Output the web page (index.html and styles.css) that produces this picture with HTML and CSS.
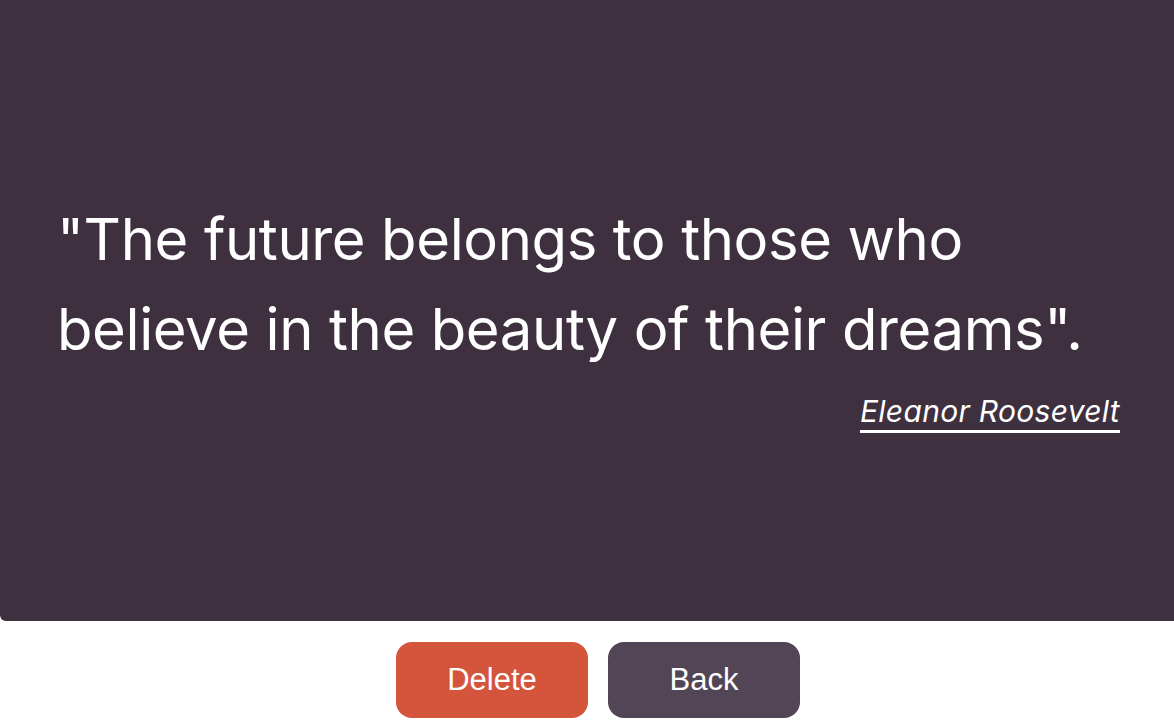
FILE: index.html
```html
<!DOCTYPE html>
<html>
<head>
<meta charset="utf-8">
<link rel="stylesheet" href="styles.css">
</head>
<body>
<div class="card">
  <div class="content">
    <p class="quote">"The future belongs to those who believe in the beauty of their dreams".</p>
    <p class="author"><a href="#">Eleanor Roosevelt</a></p>
  </div>
</div>
<div class="actions">
  <button class="btn btn-delete">Delete</button>
  <button class="btn btn-back">Back</button>
</div>
</body>
</html>
```
FILE: styles.css
```css
html, body {
  margin: 0;
  padding: 0;
  background: #ffffff;
}
body {
  font-family: Inter, "Noto Sans", sans-serif;
  overflow: hidden;
}
.card {
  background: #3f3040;
  height: 621px;
  border-radius: 0 0 0 6px;
  display: flex;
  flex-direction: column;
  justify-content: center;
  padding: 0 54px 0 57px;
  box-sizing: border-box;
}
.content {
  display: flex;
  flex-direction: column;
}
.quote {
  margin: 0;
  color: #ffffff;
  font-size: 58px;
  line-height: 90px;
  letter-spacing: -0.4px;
  font-weight: 400;
}
.author {
  margin: 20px 0 0;
  text-align: right;
  font-size: 30px;
  line-height: 34px;
  letter-spacing: 0.3px;
  font-style: italic;
}
.author a {
  color: #ffffff;
  text-decoration: underline;
  text-decoration-thickness: 3px;
  text-underline-offset: 8px;
}
.actions {
  display: flex;
  justify-content: center;
  gap: 20px;
  padding-left: 22px;
  margin-top: 21px;
}
.btn {
  width: 192px;
  height: 76px;
  border: none;
  border-radius: 16px;
  color: #ffffff;
  font-family: "Liberation Sans", Arial, sans-serif;
  font-size: 31px;
  cursor: pointer;
}
.btn-delete {
  background: #d4553b;
}
.btn-back {
  background: #524555;
}
```
